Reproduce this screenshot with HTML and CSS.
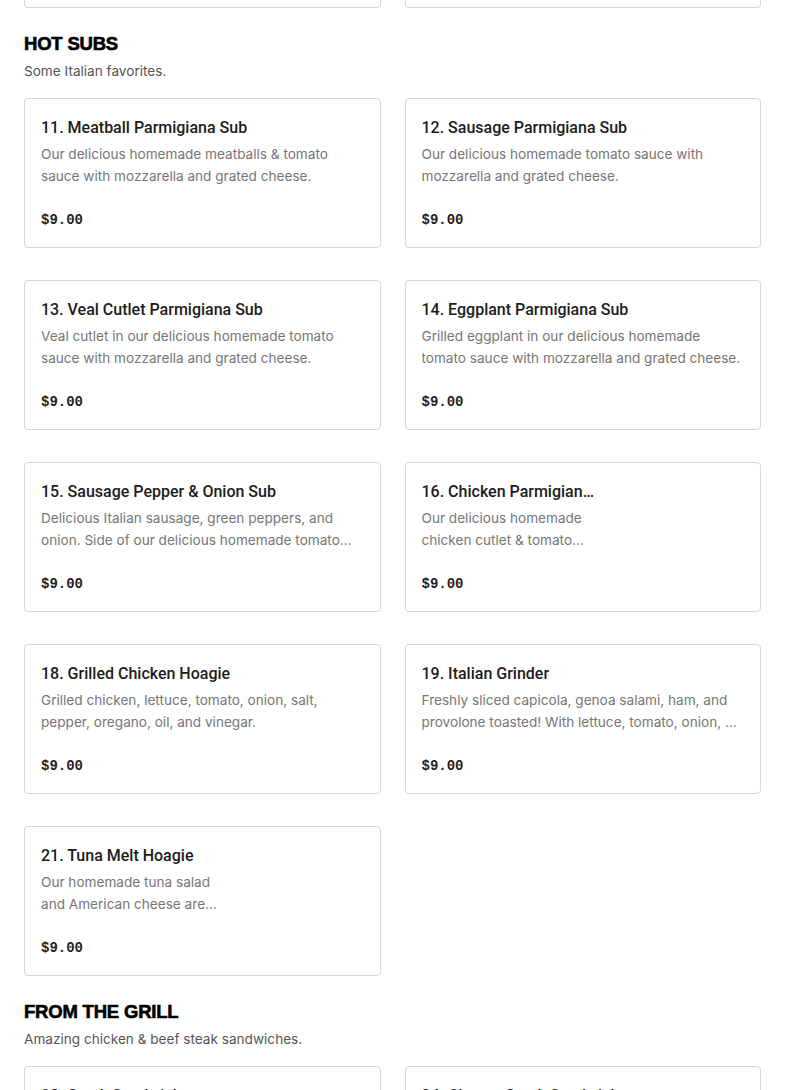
FILE: index.html
```html
<!DOCTYPE html>
<html lang="en">
<head>
<meta charset="utf-8">
<title>Menu</title>
<link rel="stylesheet" href="styles.css">
</head>
<body>
<main class="menu">
  <div class="grid tails">
    <div class="card-tail"></div>
    <div class="card-tail"></div>
  </div>

  <section class="section">
    <h2 class="section-title">HOT SUBS</h2>
    <p class="section-desc">Some Italian favorites.</p>
    <div class="grid">
      <article class="card">
        <div class="card-body">
          <h3 class="item-title">11. Meatball Parmigiana Sub</h3>
          <p class="item-desc">Our delicious homemade meatballs &amp; tomato sauce with mozzarella and grated cheese.</p>
          <p class="item-price">$9.00</p>
        </div>
      </article>
      <article class="card">
        <div class="card-body">
          <h3 class="item-title">12. Sausage Parmigiana Sub</h3>
          <p class="item-desc">Our delicious homemade tomato sauce with mozzarella and grated cheese.</p>
          <p class="item-price">$9.00</p>
        </div>
      </article>
      <article class="card">
        <div class="card-body">
          <h3 class="item-title">13. Veal Cutlet Parmigiana Sub</h3>
          <p class="item-desc">Veal cutlet in our delicious homemade tomato sauce with mozzarella and grated cheese.</p>
          <p class="item-price">$9.00</p>
        </div>
      </article>
      <article class="card">
        <div class="card-body">
          <h3 class="item-title">14. Eggplant Parmigiana Sub</h3>
          <p class="item-desc">Grilled eggplant in our delicious homemade tomato sauce with mozzarella and grated cheese.</p>
          <p class="item-price">$9.00</p>
        </div>
      </article>
      <article class="card">
        <div class="card-body">
          <h3 class="item-title">15. Sausage Pepper &amp; Onion Sub</h3>
          <p class="item-desc">Delicious Italian sausage, green peppers, and onion. Side of our delicious homemade tomato sauce and grated cheese.</p>
          <p class="item-price">$9.00</p>
        </div>
      </article>
      <article class="card has-photo">
        <div class="card-body">
          <h3 class="item-title">16. Chicken Parmigiana Sub</h3>
          <p class="item-desc">Our delicious homemade chicken cutlet &amp; tomato sauce with mozzarella and grated cheese.</p>
          <p class="item-price">$9.00</p>
        </div>
        <div class="photo"></div>
      </article>
      <article class="card">
        <div class="card-body">
          <h3 class="item-title">18. Grilled Chicken Hoagie</h3>
          <p class="item-desc">Grilled chicken, lettuce, tomato, onion, salt, pepper, oregano, oil, and vinegar.</p>
          <p class="item-price">$9.00</p>
        </div>
      </article>
      <article class="card">
        <div class="card-body">
          <h3 class="item-title">19. Italian Grinder</h3>
          <p class="item-desc">Freshly sliced capicola, genoa salami, ham, and provolone toasted! With lettuce, tomato, onion, oil, and vinegar.</p>
          <p class="item-price">$9.00</p>
        </div>
      </article>
      <article class="card has-photo">
        <div class="card-body">
          <h3 class="item-title">21. Tuna Melt Hoagie</h3>
          <p class="item-desc">Our homemade tuna salad and American cheese are melted together on a toasted roll.</p>
          <p class="item-price">$9.00</p>
        </div>
        <div class="photo"></div>
      </article>
    </div>
  </section>

  <section class="section">
    <h2 class="section-title">FROM THE GRILL</h2>
    <p class="section-desc">Amazing chicken &amp; beef steak sandwiches.</p>
    <div class="grid">
      <article class="card">
        <div class="card-body">
          <h3 class="item-title">23. Steak Sandwich</h3>
          <p class="item-desc">Thinly sliced steak grilled with onions on a toasted roll.</p>
          <p class="item-price">$9.00</p>
        </div>
      </article>
      <article class="card">
        <div class="card-body">
          <h3 class="item-title">24. Cheese Steak Sandwich</h3>
          <p class="item-desc">Thinly sliced steak grilled with onions and melted American cheese.</p>
          <p class="item-price">$9.00</p>
        </div>
      </article>
    </div>
  </section>
</main>
</body>
</html>
```

FILE: styles.css
```css
* { box-sizing: border-box; }

html, body {
  margin: 0;
  padding: 0;
  background: #ffffff;
}

body {
  font-family: Inter, Roboto, "Liberation Sans", Arial, sans-serif;
  color: #1f1f1f;
  overflow: hidden;
}

.menu {
  padding: 0 24px;
  width: 785px;
}

.grid {
  display: grid;
  grid-template-columns: 1fr 1fr;
  column-gap: 24px;
  row-gap: 32px;
}

.card-tail {
  height: 8px;
  border: 1px solid #d6d6d6;
  border-top: none;
  border-radius: 0 0 4px 4px;
}

.section {
  padding-top: 24px;
}

.section-title {
  margin: 0;
  font-family: "Liberation Sans", Arial, sans-serif;
  font-weight: 900;
  font-size: 18.5px;
  line-height: 24px;
  letter-spacing: -0.2px;
  color: #000;
  -webkit-text-stroke: 0.6px #000;
}

.section-desc {
  margin: 4px 0 16px;
  font-size: 13.6px;
  line-height: 22px;
  color: #555;
}

.card {
  display: flex;
  height: 150px;
  border: 1px solid #d6d6d6;
  border-radius: 4px;
  background: #fff;
  overflow: hidden;
}

.card-body {
  flex: 1;
  min-width: 0;
  padding: 17px 16px 0;
}

.has-photo .card-body {
  flex: 0 0 212px;
}

.photo {
  flex: 1;
}

.item-title {
  margin: 0 0 3px;
  font-family: Roboto, "Liberation Sans", Arial, sans-serif;
  font-size: 16px;
  line-height: 24px;
  font-weight: 500;
  color: #1c1c1c;
  white-space: nowrap;
  overflow: hidden;
  text-overflow: ellipsis;
}

.item-desc {
  margin: 0;
  font-size: 13.6px;
  line-height: 22px;
  color: #767676;
  display: -webkit-box;
  -webkit-line-clamp: 2;
  -webkit-box-orient: vertical;
  overflow: hidden;
  height: 44px;
}

.item-price {
  margin: 22px 0 0;
  font-family: "Liberation Mono", "DejaVu Sans Mono", monospace;
  font-weight: 700;
  font-size: 14px;
  line-height: 22px;
  color: #1f1f1f;
}
```
